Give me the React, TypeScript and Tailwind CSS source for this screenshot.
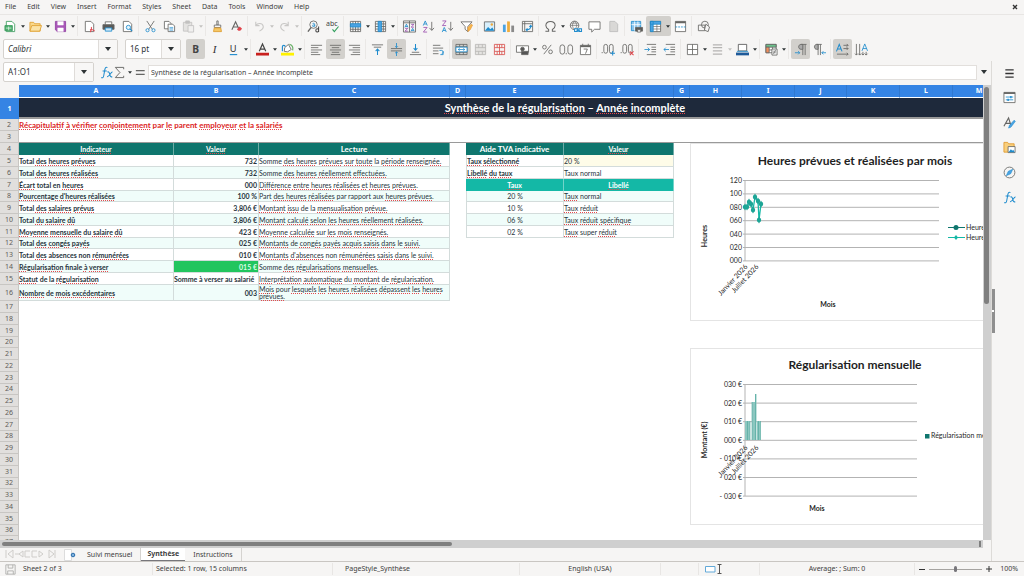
import { Fragment, type ReactNode } from 'react'
import clsx from 'clsx'

const menus = ['File', 'Edit', 'View', 'Insert', 'Format', 'Styles', 'Sheet', 'Data', 'Tools', 'Window', 'Help']

const columns = [
  { name: 'A', width: 155 },
  { name: 'B', width: 85 },
  { name: 'C', width: 191 },
  { name: 'D', width: 16 },
  { name: 'E', width: 98 },
  { name: 'F', width: 110 },
  { name: 'G', width: 16 },
  { name: 'H', width: 52 },
  { name: 'I', width: 53 },
  { name: 'J', width: 52 },
  { name: 'K', width: 53 },
  { name: 'L', width: 53 },
  { name: 'M', width: 53 },
  { name: 'N', width: 52 },
  { name: 'O', width: 53 },
]

// words between asterisks are flagged by the spell checker
const indicators = [
  ['Total *des heures prévues*', '732', 'Somme *des heures prévues sur toute* la *période renseignée.*'],
  ['Total *des heures réalisées*', '732', 'Somme *des heures réellement effectuées.*'],
  ['*Écart* total en *heures*', '000', '*Différence entre heures réalisées et heures prévues.*'],
  ["*Pourcentage d'heures réalisées*", '100 %', 'Part *des heures réalisées* par rapport aux *heures prévues.*'],
  ['Total *des salaires prévus*', '3,806 €', '*Montant issu* de la *mensualisation prévue.*'],
  ['Total *du salaire dû*', '3,806 €', '*Montant calculé selon les heures réellement réalisées.*'],
  ['*Moyenne mensuelle* du *salaire dû*', '423 €', '*Moyenne calculée* sur *les mois renseignés.*'],
  ['Total *des congés payés*', '025 €', '*Montants* de *congés payés acquis saisis dans* le *suivi.*'],
  ['Total *des* absences non *rémunérées*', '010 €', "*Montants d'absences* non *rémunérées saisis dans* le *suivi.*"],
  ['*Régularisation* finale *à verser*', '015 €', 'Somme *des régularisations mensuelles.*'],
  ['*Statut* de la *régularisation*', 'Somme à verser au salarié', '*Interprétation automatique* du *montant* de *régularisation.*'],
  ['*Nombre* de *mois excédentaires*', '003', '*Mois* pour *lesquels les heures réalisées dépassent les heures prévues.*'],
]

const rates = [
  ['20 %', '*Taux* normal'],
  ['10 %', '*Taux réduit*'],
  ['06 %', '*Taux réduit spécifique*'],
  ['02 %', '*Taux* super *réduit*'],
]

const LINE = 'border-r border-b border-[#d3dcdb]'

function Spell({ text }: { text: string }) {
  return (
    <>
      {text.split('*').map((part, i) =>
        i % 2 === 0 ? (
          <Fragment key={i}>{part}</Fragment>
        ) : (
          part.split(' ').map((word, j) => (
            <Fragment key={`${i}-${j}`}>
              {j > 0 && ' '}
              <span className="underline decoration-[#e5484d] decoration-dotted decoration-1 underline-offset-1">{word}</span>
            </Fragment>
          ))
        ),
      )}
    </>
  )
}

/* ---------- icons, all drawn on a 14 x 14 grid ---------- */

function Ic({ children }: { children: ReactNode }) {
  return (
    <svg viewBox="0 0 14 14" className="size-[13px] shrink-0 overflow-visible" fill="none" stroke="#666664" strokeWidth="0.9" aria-hidden="true">
      {children}
    </svg>
  )
}

const B = '#1e8bcd'
const R = '#e0454c'

const page = <path d="M2.5 1.5h6l3 3v8h-9z" fill="#fff" />

const icons: Record<string, ReactNode> = {
  new: <><path d="M2.5 1.5h6l3 3v8h-9z" fill="#fff" stroke="#3a9b5c" /><path d="M1 6h8v5.500H1z" fill="#4caf6e" stroke="#3a9b5c" /><path d="M2 8.700h6M5 7v4" stroke="#fff" strokeWidth=".7" /></>,
  open: <><path d="M1 2.500h4l1 1.500h6v8H1z" fill="#f9d98c" stroke="#e0a030" /><path d="M1 12l2-6h10.500l-2 6z" fill="#fbe3a6" stroke="#e0a030" /></>,
  save: <><path d="M1.500 1.500h11v11h-9l-2-2z" fill="#a957b8" stroke="#8e3fa0" /><path d="M4 1.500h6v4H4zM4 8.500h6v4H4z" fill="#fff" stroke="#fff" strokeWidth=".5" /></>,
  pdf: <>{page}<path d="M8 13c1-3 1.500-4 1-5.500M7.500 10.500c2-.5 4 .5 5 1.500" stroke={R} strokeWidth="1.100" /></>,
  print: <><path d="M3.500 5V2h7v3" fill="#fff" /><path d="M1 5h12v5H1z" fill="#5a5a58" /><path d="M3.500 8.500h7V12h-7z" fill="#cfe8f7" stroke={B} /></>,
  preview: <>{page}<circle cx="8" cy="8" r="2.300" stroke={B} fill="#e3f3fb" /><path d="M9.600 9.600L12 12" stroke={B} strokeWidth="1.300" /></>,
  cut: <><path d="M3 1l6 9M11 1L5 10" /><circle cx="3.800" cy="11" r="1.700" stroke={B} /><circle cx="10.200" cy="11" r="1.700" stroke={B} /></>,
  copy: <><path d="M1.500 1.500h5l2 2v6h-7z" fill="#fff" /><path d="M5.500 4.500h5l2 2v6h-7z" fill="#fff" /><path d="M7 8h4M7 9.500h4M7 11h4" stroke={B} strokeWidth=".7" /></>,
  paste: <g stroke="#c3c2c0"><path d="M1.500 2.500h9v9.500h-9z" fill="#e4e3e1" /><path d="M4 1h4v2.500H4z" fill="#c3c2c0" /><path d="M6.500 6h6v7h-6z" fill="#f1f0ef" /></g>,
  clone: <><path d="M6.300 1h1.400v4.500H6.300z" fill="#fff" /><path d="M3.500 5.500h7V8h-7z" fill="#fff" /><path d="M3.500 8.500h7l.8 4H2.700z" fill="#f5c766" stroke="#dd9a2a" /></>,
  clear: <><path d="M2 10.500L6 2l4 8.500M3.500 7.500h5" strokeWidth="1.200" /><path d="M7.500 10l3-3 2.500 2.500-2 2H9z" fill={R} stroke="none" /></>,
  undo: <path d="M3 2v4h4M3 6c2-3 7-3 8 .5.500 2-1.500 4-4 5.500" stroke="#c9c8c6" strokeWidth="1.200" />,
  redo: <path d="M11 2v4H7M11 6c-2-3-7-3-8 .5-.5 2 1.500 4 4 5.500" stroke="#c9c8c6" strokeWidth="1.200" />,
  find: <><circle cx="7" cy="5" r="4" /><path d="M4.500 8L1 12.500" strokeWidth="1.500" /><path d="M6 4c1.500-1 2.500 0 2.300 1v2M8.300 5.300c-3-.3-3 2-1.300 1.700.8 0 1.300-.5 1.300-1" stroke={B} /><path d="M12.500 7v6M12.500 10.500c-.5-1.500-3-1.500-3 .7s2.500 2.200 3 .5" strokeWidth="1.100" stroke="#444" /></>,
  spell: <><text x="0" y="6.500" fontSize="7.500" fill="#444" stroke="none">abc</text><path d="M7 10l2 2.500L13.500 7" stroke="#2f9e5b" strokeWidth="1.200" /></>,
  row: <><path d="M1.500 1.500h11v11h-11zM4.250 1.500v11M7 1.500v11M9.750 1.500v11M1.500 10h11" /><path d="M1.500 4h11v3.500h-11z" fill="#4ba3e3" stroke={B} /></>,
  col: <><path d="M1.500 1.500h11v11h-11zM1.500 4.250h11M1.500 7h11M1.500 9.750h11M10 1.500v11" /><path d="M4.500 1.500H8v11H4.500z" fill="#4ba3e3" stroke={B} /></>,
  sort: <><path d="M.5 1h13v12H.5zM7 1v12M.5 3h13" /><path d="M2 8l1.700-3.500L5.400 8M2.600 7h2.200M8.700 12l1.700-3L12 12M9.300 11.200h2.200" stroke={B} /><path d="M2.200 9h3L2.200 12h3M8.800 4.700h3L8.800 7.700h3" stroke="#9b4fb0" /></>,
  asc: <><path d="M1.300 6L3.500 1l2.200 5M2.200 4.300h2.600" stroke={B} /><path d="M1.500 8h4l-4 5h4" stroke="#9b4fb0" /><path d="M10.500 2v9M8 8.500l2.500 2.700L13 8.500" /></>,
  desc: <><path d="M1.500 1h4l-4 5h4" stroke="#9b4fb0" /><path d="M1.300 13l2.200-5 2.200 5M2.200 11.300h2.600" stroke={B} /><path d="M10.500 2v9M8 8.500l2.500 2.700L13 8.500" /></>,
  filter: <><path d="M1 2h12L8.500 7v5.500L5.500 10V7z" fill="#fff" /><path d="M8.500 8l3.500-3.500 1.500 1-2.500 5-2.500 2z" fill="#f7b64c" stroke="#e28d20" strokeWidth=".6" /></>,
  image: <><path d="M1.500 2h11v10h-11z" fill="#d8effb" stroke="#666" /><path d="M2 11.500l3.500-4 2.500 2.500 2-2 2.200 3.500z" fill={B} stroke="none" /><circle cx="9.500" cy="4.800" r="1.300" fill="#f0a83a" stroke="none" /></>,
  chart: <g stroke="none"><path d="M1 5h3v8H1z" fill="#4ba3e3" /><path d="M5.500 1.500h3V13h-3z" fill="#f0ad3c" /><path d="M10 6h3v7h-3z" fill="#8a8a8a" /></g>,
  pivot: <><path d="M1.500 1.500h11v11h-11zM1.500 4h11M4 1.500v11" /><path d="M6 10.500c3 0 4.500-1.500 4.500-4M9 7.500l1.500-1.700L12 7.500M7 9l-1.500 1.500L7 12" stroke={B} strokeWidth="1.100" /></>,
  omega: <path d="M1.500 12h3.500v-1.800C3 9 2 7.500 2 5.800 2 3.200 4.200 1.500 7 1.500s5 1.700 5 4.300c0 1.700-1 3.200-3 4.400V12h3.500" strokeWidth="1.100" />,
  link: <><circle cx="6" cy="5.800" r="4.600" /><path d="M1.400 5.800h9.200M6 1.200c-3 3-3 6 0 9.200M6 1.200c3 3 3 6 0 9.200M2.200 3.400h7.600" strokeWidth=".7" /><path d="M6 9.500h3v3H6zM10.500 9.500h3v3h-3zM8 11h4" stroke={B} strokeWidth="1.100" fill="#f6f5f4" /></>,
  comment: <path d="M1 2h12v8H7l-3 3v-3H1z" fill="#fff" />,
  doc: <path d="M3 1.500h5.500l3 3v8H3z" fill="#d9d8d6" stroke="#bbb" />,
  area: <><path d="M1.500 1.500h10v10h-10z" fill="#8cc5ee" stroke={B} /><path d="M1.500 5h10M5 1.500v10M8.500 1.500v10" stroke="#fff" /><path d="M6 8h7.500v4H6z" fill="#5a5a58" /><path d="M8 10.500h3.500V13H8z" fill="#fff" /></>,
  freeze: <><path d="M1.500 1.500h11v11h-11z" fill="#fff" /><path d="M1.500 1.500h11v3h-11zM1.500 1.500h3v11h-3z" fill="#4ba3e3" stroke={B} /><path d="M4.500 7h8M4.500 9.700h8M8.500 4.500v8" strokeWidth=".7" /></>,
  split: <><path d="M1.500 1.500h11v11h-11z" fill="#fff" /><path d="M1.500 2.500h11" strokeWidth="2" /><path d="M1.500 7.500h11" stroke={B} strokeDasharray="2 1" /></>,
  shapes: <><path d="M1.500 5.500h7v6h-7z" fill="#f6f5f4" /><circle cx="8.500" cy="5" r="3.700" /><path d="M9.500 4.500l4 3-1.500 5-4-1.500z" fill="#f6f5f4" /></>,
  bold: <text x="3.500" y="11" fontSize="11" fontWeight="700" fill="#444" stroke="none">B</text>,
  italic: <text x="5" y="11" fontSize="12" fontStyle="italic" fontFamily="Liberation Serif, serif" fill="#333" stroke="none">I</text>,
  underline: <><text x="3" y="10" fontSize="10" fill="#333" stroke="none">U</text><path d="M3 12.500h8" stroke={B} strokeWidth="1.200" /></>,
  color: <><path d="M0 10.500h14v3H0z" fill="#c9211e" stroke="none" /><path d="M3.500 9L7 1l3.500 8M4.800 6.500h4.500" stroke="#444" strokeWidth="1.300" /></>,
  fill: <><path d="M0 10.500h14v3H0z" fill="#fff200" stroke="none" /><path d="M4 5l4-3.500 3 5.500-4 2.500-3.500-.5z" fill="#fff" /><path d="M1.500 9V4c0-2 3-2 3 0" stroke={B} strokeWidth="1.200" /><path d="M9 1.500c3 .5 4.500 3 3.500 6.500" stroke="#6cb26b" strokeWidth="1.300" /></>,
  left: <path d="M1 2.500h12M1 5h8M1 7.500h12M1 10h8M1 12.500h10" />,
  center: <path d="M1 2.500h12M3 5h8M1 7.500h12M3 10h8M2 12.500h10" />,
  right: <path d="M1 2.500h12M5 5h8M1 7.500h12M5 10h8M3 12.500h10" />,
  top: <><path d="M1 2h12M3 4.500h8" /><path d="M7 13V7M5 8.700L7 6.500l2 2.200" stroke={B} strokeWidth="1.100" /></>,
  middle: <><path d="M1 6h12M1 8.500h12" /><path d="M7 0v5M5.500 3.500L7 5l1.500-1.500M7 14V9.500M5.500 11L7 9.500 8.500 11" stroke={B} /></>,
  bottom: <><path d="M1 12.500h12M3 10h8" /><path d="M7 1v6M5 5.500l2 2.200 2-2.200" stroke={B} strokeWidth="1.100" /></>,
  wrap: <><path d="M1 2.500h8M1 5.500h11M1 8.500h6M1 11.500h6" /><path d="M8 8h2.500c2 0 2 3.500 0 3.500M12 9v3.500H9" stroke={B} /></>,
  merge: <><path d="M1 1.500h12v11H1zM1 4h12M1 10h12M5 1.500V4M9 1.500V4M5 10v2.500M9 10v2.500" /><path d="M1 4.500h12v5H1z" fill="#fff" stroke={B} /><path d="M3.500 7h7M5 5.800L3.500 7 5 8.200M9 5.800L10.500 7 9 8.200" stroke={B} strokeWidth=".8" /></>,
  cells: <path d="M1.500 1.500h11v11h-11zM1.500 5h11M1.500 9h11M5 1.500V5M9 1.500V5M5 9v3.500M9 9v3.500" stroke="#b9b8b6" fill="#e4e3e1" />,
  unmerge: <path d="M1.500 1.500h11v11h-11zM1.500 5h11M1.500 9h11M4.500 1.500v3.500M7 1.500v11M9.500 1.500v3.500M4.500 9v3.500M9.500 9v3.500" stroke="#d9534f" />,
  currency: <><path d="M.5 3h13v7H.5z" fill="#fff" /><circle cx="7" cy="6.500" r="2" fill="#555" /><path d="M6 9h7v3.500H6z" fill="#555" /></>,
  percent: <><circle cx="3.700" cy="4.500" r="2" /><circle cx="10.300" cy="9.500" r="2" /><path d="M11 2L3 12" /></>,
  number: <><rect x="0" y="2" width="5" height="10" rx="2.500" /><rect x="8.500" y="2" width="5" height="10" rx="2.500" /><path d="M6.700 10.700v1.500" /></>,
  date: <><path d="M1.500 2.500h11v10h-11z" fill="#fff" /><path d="M1.500 3.500h11" strokeWidth="2" /><path d="M4 .8v2M10 .8v2M5 6.500h4l-2 5" /></>,
  decPlus: <><rect x="2" y="1.500" width="4" height="9.500" rx="2" /><rect x="8" y="1.500" width="4" height="9.500" rx="2" /><path d="M.2 9.700v1.300" /><path d="M11.500 8.500v5M9 11h5" stroke={B} strokeWidth="1.100" /></>,
  decMinus: <><rect x="2" y="1.500" width="4" height="9.500" rx="2" /><rect x="8" y="1.500" width="4" height="9.500" rx="2" /><path d="M.2 9.700v1.300" /><path d="M9.500 9l4 4M13.500 9l-4 4" stroke={R} strokeWidth="1.100" /></>,
  indent: <><path d="M3 1.500h10M8 4.500h5M8 7h5M8 9.500h5M3 12.500h10" /><path d="M.5 7H6M4 5l2 2-2 2" stroke={B} /></>,
  outdent: <><path d="M3 1.500h10M8 4.500h5M8 7h5M8 9.500h5M3 12.500h10" /><path d="M6.500 7H1M3 5L1 7l2 2" stroke={B} /></>,
  borders: <path d="M1.500 1.500h11v11h-11zM7 1.500v11M1.500 7h11" fill="#fff" />,
  lines: <path d="M2 2h10M2 5h10M2 8.500h10M2 12h10" stroke="#b5b4b2" strokeWidth="1.400" />,
  lineColor: <><path d="M2.500 1.500h9v7h-9z" fill="#fff" stroke="#555" /><path d="M0 10.300h14v3H0z" fill="#1f5a99" stroke="none" /><path d="M1 9h12" stroke={B} /></>,
  cond: <><path d="M1 1.500h11v9H1z" fill="#fff" /><path d="M1 1.500h11v3H1z" fill="#6cc18b" /><path d="M1 4.500h3.500v6H1z" fill="#ef8d5b" /><path d="M4.500 7.500H12M8 4.500v6" /><path d="M7.500 6.500h5.500v6.500H7.500z" fill="#fff" /><path d="M8.700 8.800h3M8.700 10.500h3M11.500 7.500l-2.500 4.500" strokeWidth=".7" /></>,
  ltr: <><path d="M13.500 1.500H7.500M9.500 1.500v11.500M12 1.500v11.500" /><path d="M9.500 1.500H7.500c-3.300 0-3.300 5.300 0 5.300h2z" fill="#aaa" /><path d="M1 10.500h5M4.500 8.800L6.200 10.500l-1.700 1.700" stroke={B} /></>,
  rtl: <><path d="M9.500 1.500H3.500M5.500 1.500v11.500M8 1.500v11.500" /><path d="M5.500 1.500H4C.7 1.500.7 6.800 4 6.800h1.500z" fill="#aaa" /><path d="M14 10.500H9.500M11.200 8.800L9.500 10.500l1.700 1.700" stroke={B} /></>,
  horiz: <><path d="M.5 9L3.500 1.500 6.500 9M1.500 6.500h4" stroke={B} strokeWidth="1.100" /><path d="M8 2.500h5M8 6h5M1 12h12M11.500 1l1.500 1.500L11.500 4M11.500 4.500L13 6l-1.500 1.500M11.500 10.500L13 12l-1.500 1.500" /></>,
  vert: <><path d="M7.500 8.500l3-7.500 3 7.500M8.500 6h4" stroke={B} /><path d="M1.500 1v12M5 1v12M8.500 9.500v3.500M12 9.500v3.500M0 11.500L1.500 13 3 11.500M3.500 11.500L5 13l1.500-1.500M7 11.500L8.500 13l1.500-1.500M10.500 11.500L12 13l1.500-1.500" /></>,
  fx: <path d="M8 1.800C6.300.8 5.500 2 5.200 4L4 10.500c-.3 2-1.200 2.700-2.800 2M2.800 5.500h4.500M8 6.500c1.500-.6 2 .5 2.500 2.500s1 3.200 2.700 2.500M13.500 6.500c-2-.5-3 5.500-6 5" stroke={B} strokeWidth="1.100" />,
  sum: <path d="M11.500 3.500v-2h-9L7.500 7l-5 5.500h9v-2" strokeWidth="1" />,
  equal: <path d="M2 5h9.500M2 9h9.500" strokeWidth="1.500" />,
  menu: <path d="M2.500 3h9M2.500 7h9M2.500 11h9" stroke="#333" strokeWidth="1.400" />,
  props: <><path d="M1 1.500h12v11H1z" fill="#fff" /><path d="M1 2.300h12" strokeWidth="1.800" /><path d="M3 6.500h8M3 9.500h8" stroke={B} /><path d="M8.500 5.300v2.400M5.500 8.300v2.400" stroke={B} strokeWidth="1.500" /></>,
  styles: <><path d="M1 11L6 2l2.500 8M3 8h5" strokeWidth="1.200" /><path d="M6 13l1-3 5-5.500 1.300 1.200L8.500 12z" fill="#4ba3e3" stroke={B} strokeWidth=".6" /></>,
  gallery: <><path d="M1 1.500h4l1 1.500h6v9H1z" fill="#f9cf7c" stroke="#e0972a" /><path d="M5.500 6h7.500v6.500H5.500z" fill="#fff" /><path d="M6 12l2.500-3 1.500 1.500 1-1 1.700 2.500z" fill={B} stroke="none" /></>,
  compass: <><circle cx="7" cy="7" r="5.800" /><path d="M10.500 3.500L8.300 8.300 3.500 10.500l2.200-4.800z" fill="#4ba3e3" stroke={B} strokeWidth=".6" /></>,
  disk: <path d="M2 2h10v10H2zM4.500 2v3.500h5V2M4 12V8.500h6V12" stroke="#aaa9a7" />,
}

type Tool = { id: string; label: string; drop?: boolean; on?: boolean; off?: boolean; sep?: boolean }

const standardBar: Tool[] = [
  { id: 'new', label: 'New', drop: true },
  { id: 'open', label: 'Open', drop: true },
  { id: 'save', label: 'Save', drop: true, sep: true },
  { id: 'pdf', label: 'Export as PDF' },
  { id: 'print', label: 'Print' },
  { id: 'preview', label: 'Print Preview', sep: true },
  { id: 'cut', label: 'Cut' },
  { id: 'copy', label: 'Copy' },
  { id: 'paste', label: 'Paste', drop: true, off: true, sep: true },
  { id: 'clone', label: 'Clone Formatting' },
  { id: 'clear', label: 'Clear Formatting', sep: true },
  { id: 'undo', label: 'Undo', drop: true, off: true },
  { id: 'redo', label: 'Redo', drop: true, off: true, sep: true },
  { id: 'find', label: 'Find and Replace' },
  { id: 'spell', label: 'Spelling', sep: true },
  { id: 'row', label: 'Row', drop: true },
  { id: 'col', label: 'Column', drop: true, sep: true },
  { id: 'sort', label: 'Sort' },
  { id: 'asc', label: 'Sort Ascending' },
  { id: 'desc', label: 'Sort Descending' },
  { id: 'filter', label: 'AutoFilter', sep: true },
  { id: 'image', label: 'Insert Image' },
  { id: 'chart', label: 'Insert Chart' },
  { id: 'pivot', label: 'Pivot Table', sep: true },
  { id: 'omega', label: 'Special Character', drop: true },
  { id: 'link', label: 'Insert Hyperlink' },
  { id: 'comment', label: 'Insert Comment' },
  { id: 'doc', label: 'Headers and Footers', off: true, sep: true },
  { id: 'area', label: 'Define Print Area' },
  { id: 'freeze', label: 'Freeze Rows and Columns', drop: true, on: true },
  { id: 'split', label: 'Split Window', sep: true },
  { id: 'shapes', label: 'Show Draw Functions' },
]

const formatBar: Tool[] = [
  { id: 'bold', label: 'Bold', on: true },
  { id: 'italic', label: 'Italic' },
  { id: 'underline', label: 'Underline', drop: true, sep: true },
  { id: 'color', label: 'Font Color', drop: true },
  { id: 'fill', label: 'Background Color', drop: true, sep: true },
  { id: 'left', label: 'Align Left' },
  { id: 'center', label: 'Align Center', on: true },
  { id: 'right', label: 'Align Right', sep: true },
  { id: 'top', label: 'Align Top' },
  { id: 'middle', label: 'Center Vertically', on: true },
  { id: 'bottom', label: 'Align Bottom', sep: true },
  { id: 'wrap', label: 'Wrap Text', sep: true },
  { id: 'merge', label: 'Merge and Center Cells', on: true },
  { id: 'cells', label: 'Merge Cells', off: true },
  { id: 'unmerge', label: 'Unmerge Cells', sep: true },
  { id: 'currency', label: 'Format as Currency', drop: true },
  { id: 'percent', label: 'Format as Percent' },
  { id: 'number', label: 'Format as Number' },
  { id: 'date', label: 'Format as Date', sep: true },
  { id: 'decPlus', label: 'Add Decimal Place' },
  { id: 'decMinus', label: 'Delete Decimal Place', sep: true },
  { id: 'indent', label: 'Increase Indent' },
  { id: 'outdent', label: 'Decrease Indent', sep: true },
  { id: 'borders', label: 'Borders', drop: true },
  { id: 'lines', label: 'Border Style', drop: true, off: true },
  { id: 'lineColor', label: 'Border Color', drop: true, sep: true },
  { id: 'cond', label: 'Conditional Formatting', drop: true, sep: true },
  { id: 'ltr', label: 'Left-To-Right', on: true },
  { id: 'rtl', label: 'Right-To-Left', sep: true },
  { id: 'horiz', label: 'Text direction from left to right', on: true },
  { id: 'vert', label: 'Text direction from top to bottom' },
]

function Caret({ big, pale }: { big?: boolean; pale?: boolean }) {
  return (
    <svg viewBox="0 0 6 4" className={big ? 'h-1 w-1.5' : 'h-[3px] w-1'} aria-hidden="true">
      <path d="M0 0h6L3 4z" fill={pale ? '#c3c2c0' : '#2e3436'} />
    </svg>
  )
}

function Toolbar({ tools }: { tools: Tool[] }) {
  return (
    <>
      {tools.map((t) => (
        <Fragment key={t.id}>
          <div className={clsx('flex h-5 items-center rounded-xs', t.on && 'bg-[#d2d0cc]')}>
            <button type="button" aria-label={t.label} disabled={t.off} className="flex w-[19px] items-center justify-center">
              <Ic>{icons[t.id]}</Ic>
            </button>
            {t.drop && (
              <button type="button" aria-label={`${t.label} options`} className="flex h-5 w-1.5 items-center justify-center">
                <Caret pale={t.off} />
              </button>
            )}
          </div>
          {t.sep && <div className="mr-0.5 ml-px h-5 w-px shrink-0 bg-[#eae8e6]" />}
        </Fragment>
      ))}
    </>
  )
}

function Combo({ label, value, className, italic }: { label: string; value: string; className: string; italic?: boolean }) {
  return (
    <div className={clsx('flex h-5 shrink-0 overflow-hidden rounded-xs border border-[#d5d2ce] bg-white', className)}>
      <input aria-label={label} defaultValue={value} className={clsx('min-w-0 flex-1 px-1 text-[8px] text-[#2e3436] outline-none', italic && 'italic')} />
      <button type="button" aria-label={`${label} list`} className="flex w-[19px] items-center justify-center border-l border-[#dfdcd9] bg-[#f8f7f6]">
        <Caret big />
      </button>
    </div>
  )
}

/* ---------- sheet ---------- */

function rowHeight(n: number) {
  if (n === 16) return 'h-4'
  return n > 4 && n % 4 === 0 ? 'h-[11px]' : 'h-3'
}

function LeftCells({ n }: { n: number }) {
  if (n === 4) {
    return (
      <>
        {['*Indicateur*', '*Valeur*', 'Lecture'].map((t) => (
          <td key={t} className={clsx('border-r border-[#6fada6] bg-[#0f766e] text-center font-bold text-white', t === 'Lecture' && 'text-[8px]')}>
            <Spell text={t} />
          </td>
        ))}
      </>
    )
  }
  const item = indicators[n - 5]
  if (!item) return <td colSpan={3} />
  const tint = n % 2 === 0 && 'bg-[#f0fdfa]'
  return (
    <>
      <td className={clsx(LINE, tint, 'font-bold')}><Spell text={item[0]} /></td>
      <td className={clsx(LINE, 'text-right font-bold', n === 14 ? 'bg-[#22c55e] text-[#dcfce7]' : tint)}>
        <span className={n === 15 ? 'pr-1' : 'pr-px'}>{item[1]}</span>
      </td>
      <td className={clsx(LINE, tint, n === 16 && 'leading-[7px] whitespace-normal')}><Spell text={item[2]} /></td>
    </>
  )
}

function RightCells({ n }: { n: number }) {
  if (n === 4 || n === 7) {
    const head = clsx('border-r border-white/40 text-center font-bold text-white', n === 4 ? 'bg-[#0f766e]' : 'bg-[#14b8a6]')
    return (
      <>
        <td className={clsx(head, n === 4 && 'text-[8px]')}><Spell text={n === 4 ? 'Aide TVA indicative' : '*Taux*'} /></td>
        <td className={head}><Spell text={n === 4 ? '*Valeur*' : '*Libellé*'} /></td>
      </>
    )
  }
  if (n === 5 || n === 6) {
    return (
      <>
        <td className={clsx(LINE, 'border-l font-bold')}><Spell text={n === 5 ? '*Taux sélectionné*' : '*Libellé du taux*'} /></td>
        <td className={clsx(LINE, n === 5 && 'bg-[#fefce8]')}>{n === 5 ? '20 %' : 'Taux normal'}</td>
      </>
    )
  }
  const rate = rates[n - 8]
  if (!rate) return <td colSpan={2} />
  const tint = n % 2 === 0 && 'bg-[#f0fdfa]'
  return (
    <>
      <td className={clsx(LINE, tint, 'border-l text-center')}>{rate[0]}</td>
      <td className={clsx(LINE, tint)}><Spell text={rate[1]} /></td>
    </>
  )
}

function Sheet() {
  const body = Array.from({ length: 34 }, (_, i) => i + 4)
  const num = "border-r border-b border-[#c8c6c3] bg-[#e1dfdd] font-['Noto_Sans',sans-serif] font-normal text-[#5e5c58]"
  return (
    <table className="w-[1111px] table-fixed border-separate border-spacing-0 font-[Lato,sans-serif] text-[7px] leading-[10px] whitespace-nowrap text-[#27343c] [&_td]:p-0 [&_th]:p-0">
      <colgroup>
        <col className="w-[19px]" />
        {columns.map((c) => <col key={c.name} style={{ width: c.width }} />)}
      </colgroup>
      <thead>
        <tr className="h-[13px] font-['Noto_Sans',sans-serif] text-white">
          <td className="bg-[#f6f5f4]" />
          {columns.map((c) => (
            <th key={c.name} scope="col" className="border-r border-b border-r-[#2f78d0] border-b-white bg-[#3584e4] font-bold">{c.name}</th>
          ))}
        </tr>
      </thead>
      <tbody>
        <tr className="h-[21px]">
          <th scope="row" className="bg-[#3584e4] font-['Noto_Sans',sans-serif] text-white">1</th>
          <td colSpan={15} className="border-b-2 border-[#9a9a9a] bg-[#1e293b] text-center text-[11px] leading-[18px] font-bold text-white">
            <Spell text="*Synthèse* de la *régularisation* – *Année incomplète*" />
          </td>
        </tr>
        <tr className="h-3">
          <th scope="row" className={num}>2</th>
          <td colSpan={15} className="text-[8px] font-bold text-[#dc2626]">
            <Spell text="*Récapitulatif à vérifier conjointement* par *le* parent *employeur et* la *salariés*" />
          </td>
        </tr>
        <tr className="h-3">
          <th scope="row" className={num}>3</th>
          <td colSpan={15} className="border-b border-[#9a9a9a]" />
        </tr>
        {body.map((n) => (
          <tr key={n} className={rowHeight(n)}>
            <th scope="row" className={num}>{n}</th>
            <LeftCells n={n} />
            <td />
            <RightCells n={n} />
            <td colSpan={9} />
          </tr>
        ))}
      </tbody>
    </table>
  )
}

const hours = [[55, 64], [57, 64], [59, 59], [61, 61], [63, 67], [65, 54], [68, 58], [69, 77], [71, 61]]

function HoursChart() {
  return (
    <svg width="330" height="178" className="font-[Lato,sans-serif] text-[7px]" fill="#1f1f1f" role="img" aria-label="Heures prévues et réalisées par mois">
      <rect x=".5" y=".5" width="329" height="177" fill="#fff" stroke="#e4e4e4" />
      <text x="165" y="22" textAnchor="middle" fontWeight="700" className="text-[12px]">Heures prévues et réalisées par mois</text>
      {['120', '100', '080', '060', '040', '020', '000'].map((t, i) => (
        <g key={t}>
          <path d={`M53 ${37.5 + i * 13.4}H249`} stroke="#b3b3b3" />
          <text x="52" y={40 + i * 13.4} textAnchor="end">{t}</text>
        </g>
      ))}
      <path d="M55 37.500V118" stroke="#b3b3b3" />
      <text transform="translate(58 124) rotate(-47)" textAnchor="end">Janvier 2026</text>
      <text transform="translate(69 124) rotate(-47)" textAnchor="end">Juillet 2026</text>
      <text transform="translate(17 93) rotate(-90)" textAnchor="middle" fontWeight="700">Heures</text>
      <text x="138" y="164" textAnchor="middle" fontWeight="700">Mois</text>
      <polyline points={hours.map((p) => p.join(',')).join(' ')} fill="none" stroke="#14b8a6" strokeWidth="1.300" />
      {hours.map(([x, y]) => (
        <g key={x} fill="#1ea596">
          <circle cx={x} cy={y} r="2.200" />
          <path d={`M${x} ${y - 3.500}l2 3.500-2 3.500-2-3.500z`} />
        </g>
      ))}
      <path d="M258 84.500h17" stroke="#0f766e" />
      <circle cx="266" cy="84.500" r="2.500" fill="#0f766e" />
      <text x="276" y="87">Heures prévues</text>
      <path d="M258 94.500h17" stroke="#14b8a6" />
      <path d="M266 92l2 2.500-2 2.500-2-2.500z" fill="#14b8a6" />
      <text x="276" y="97">Heures réalisées</text>
    </svg>
  )
}

function MonthlyChart() {
  return (
    <svg width="330" height="177" className="font-[Lato,sans-serif] text-[7px]" fill="#1f1f1f" role="img" aria-label="Régularisation mensuelle">
      <rect x=".5" y=".5" width="329" height="176" fill="#fff" stroke="#e4e4e4" />
      <text x="165" y="21" textAnchor="middle" fontWeight="700" className="text-[12px]">Régularisation mensuelle</text>
      {['030 €', '020 €', '010 €', '000 €', '- 010 €', '- 020 €', '- 030 €'].map((t, i) => (
        <g key={t}>
          <path d={`M53 ${36.5 + i * 18.6}H227`} stroke="#b3b3b3" />
          <text x="52" y={39 + i * 18.6} textAnchor="end">{t}</text>
        </g>
      ))}
      <path d="M55 36.500V148" stroke="#b3b3b3" />
      <path d="M55 73h5v19h-5zM62 54h3v38h-3zM65 46h1.500v46H65zM67 73h3.500v19H67z" fill="#8cc7c0" />
      <path d="M57.500 73v19M60 73v19M62 54v38M65.500 46v46M68.500 73v19M70.500 73v19" stroke="#4ea69b" strokeWidth=".6" />
      <text transform="translate(58 100) rotate(-47)" textAnchor="end">Janvier 2026</text>
      <text transform="translate(69 100) rotate(-47)" textAnchor="end">Juillet 2026</text>
      <text transform="translate(17 92) rotate(-90)" textAnchor="middle" fontWeight="700">Montant (€)</text>
      <text x="127" y="163" textAnchor="middle" fontWeight="700">Mois</text>
      <path d="M235 86h4.500v4.500H235z" fill="#0f766e" />
      <text x="241" y="90">Régularisation mensuelle</text>
    </svg>
  )
}

function SheetTabs() {
  return (
    <div className="flex h-[13px] items-stretch bg-[#f6f5f4]">
      <svg viewBox="0 0 52 12" className="ml-1 h-3 w-[52px]" fill="none" stroke="#cfcdca" aria-hidden="true">
        <path d="M2 2v8M9 2L4 6l5 4zM19 3l-4 3 4 3zM16 6h-5M26 3h-5v6h5M33 3h-5v6h5M35 3l4 3-4 3zM45 2l5 4-5 4zM51 2v8" />
      </svg>
      <button type="button" aria-label="Add sheet" className="ml-[7px] flex w-4 items-center">
        <svg viewBox="0 0 14 12" className="h-3 w-3.5" aria-hidden="true">
          <path d="M1.500.5h7v11h-7z" fill="#fff" stroke="#ddd" />
          <circle cx="10" cy="6" r="1.800" fill="#7fb2dd" stroke="#2a6cab" />
        </svg>
      </button>
      <div role="tablist" className="flex items-stretch text-[7px] leading-3">
        <button role="tab" aria-selected="false" className="border-r border-[#d5d3d0] px-2">Suivi mensuel</button>
        <button role="tab" aria-selected="true" className="border-b border-[#77767b] bg-white px-1.5 font-bold">Synthèse</button>
        <button role="tab" aria-selected="false" className="border-r border-[#d5d3d0] px-2">Instructions</button>
      </div>
    </div>
  )
}

function StatusBar() {
  return (
    <footer className="grid h-[15px] shrink-0 grid-cols-[152fr_180fr_187fr_141fr_38fr_61fr_155fr_110fr] items-center border-t border-[#c9c6c2] text-[7px] whitespace-nowrap [&>div]:flex [&>div]:h-3 [&>div]:min-w-0 [&>div]:items-center [&>div+div]:border-l [&>div+div]:border-[#e8e6e4]">
      <div className="gap-1.5 pl-1"><Ic>{icons.disk}</Ic>Sheet 2 of 3</div>
      <div className="pl-[3px]">Selected: 1 row, 15 columns</div>
      <div className="pl-3">PageStyle_Synthèse</div>
      <div className="justify-center">English (USA)</div>
      <div />
      <div className="pl-1.5">
        <svg viewBox="0 0 18 10" className="h-2.5 w-[18px]" fill="none" aria-label="Selection mode">
          <path d="M.5 2.500h9.500v5.500H.5z" stroke="#62a9d8" fill="#fff" />
          <path d="M12.500.5h4M12.500 9.500h4M14.500.5v9" stroke="#555" />
        </svg>
      </div>
      <div className="justify-center">Average: ; Sum: 0</div>
      <div className="gap-1 pl-1">
        <button type="button" aria-label="Zoom out" className="h-px w-1.5 shrink-0 bg-[#333]" />
        <input
          type="range"
          aria-label="Zoom"
          min="20"
          max="180"
          defaultValue="100"
          className="h-1.5 w-0 min-w-0 flex-1 appearance-none bg-[linear-gradient(#a5a3a0,#a5a3a0)] bg-[length:100%_1px] bg-center bg-no-repeat [&::-webkit-slider-thumb]:h-1.5 [&::-webkit-slider-thumb]:w-[3px] [&::-webkit-slider-thumb]:appearance-none [&::-webkit-slider-thumb]:rounded-xs [&::-webkit-slider-thumb]:bg-[#77767b]"
        />
        <button type="button" aria-label="Zoom in" className="size-1.5 shrink-0">
          <svg viewBox="0 0 6 6" className="size-1.5" stroke="#333"><path d="M0 3h6M3 0v6" /></svg>
        </button>
        <span className="pr-1.5 pl-1">100%</span>
      </div>
    </footer>
  )
}

export default function App() {
  return (
    <div className="flex h-screen flex-col overflow-hidden bg-[#f6f5f4] font-['Noto_Sans',sans-serif] text-[#3d3d3d]">
      <header className="flex h-[15px] shrink-0 items-center border-b border-[#e8e6e4] text-[7px]">
        <nav className="flex flex-1 gap-px">
          {menus.map((m) => <button key={m} type="button" className="px-[5px]">{m}</button>)}
        </nav>
        <button type="button" aria-label="Close document" className="mr-1.5">
          <svg viewBox="0 0 6 6" className="size-1.5" stroke="#333" strokeWidth="1.400"><path d="M1 1l4 4M5 1L1 5" /></svg>
        </button>
      </header>

      <div className="flex h-[22px] shrink-0 items-center pl-px"><Toolbar tools={standardBar} /></div>
      <div className="flex h-6 shrink-0 items-center pl-[3px]">
        <Combo label="Font name" value="Calibri" className="mr-[7px] w-[115px]" italic />
        <Combo label="Font size" value="16 pt" className="mr-[5px] w-14" />
        <Toolbar tools={formatBar} />
      </div>

      <div className="flex min-h-0 flex-1">
        <main className="flex min-w-0 flex-1 flex-col">
          <div className="flex h-6 shrink-0 items-center pb-0.5 pl-[3px]">
            <Combo label="Name box" value="A1:O1" className="mr-1.5 w-[91px]" />
            <button type="button" aria-label="Function wizard"><Ic>{icons.fx}</Ic></button>
            <button type="button" aria-label="Select function" className="flex items-center gap-0.5"><Ic>{icons.sum}</Ic><Caret /></button>
            <button type="button" aria-label="Formula" className="mr-px ml-0.5"><Ic>{icons.equal}</Ic></button>
            <input aria-label="Input line" defaultValue="Synthèse de la régularisation – Année incomplète" className="h-[15px] min-w-0 flex-1 border border-[#e2dfdc] bg-white px-0.5 text-[7px] outline-none" />
            <button type="button" aria-label="Expand formula bar" className="flex w-3.5 justify-center"><Caret big /></button>
          </div>

          <div className="flex min-h-0 flex-1">
            <div className="relative min-w-0 flex-1 overflow-hidden bg-white">
              <Sheet />
              <div className="absolute top-[58px] left-[690px]"><HoursChart /></div>
              <div className="absolute top-[263px] left-[690px]"><MonthlyChart /></div>
            </div>
            <div className="w-2 shrink-0 bg-[#cfcfcf] px-px pt-0.5">
              <div className="h-[48%] w-[5px] rounded-full bg-[#7f7f7f]" />
            </div>
          </div>
          <div className="mr-2 flex h-2 shrink-0 items-center bg-[#cfcfcf] px-0.5">
            <div className="h-1 w-[46%] rounded-full bg-[#7f7f7f]" />
            <div className="ml-auto h-1.5 w-0.5 bg-[#7f7f7f]" />
          </div>
          <SheetTabs />
        </main>

        <div className="flex w-1 shrink-0 flex-col justify-center border-l border-[#dddbd8]">
          <div className="flex h-11 items-center bg-[#8f8f8f]"><span className="size-0.5 bg-white" /></div>
        </div>
        <aside className="flex w-[29px] shrink-0 flex-col items-center">
          {['menu', 'props', 'styles', 'gallery', 'compass', 'fx'].map((id) => (
            <button key={id} type="button" aria-label={id} className="flex h-[25px] items-center first:h-6"><Ic>{icons[id]}</Ic></button>
          ))}
        </aside>
      </div>

      <StatusBar />
    </div>
  )
}
